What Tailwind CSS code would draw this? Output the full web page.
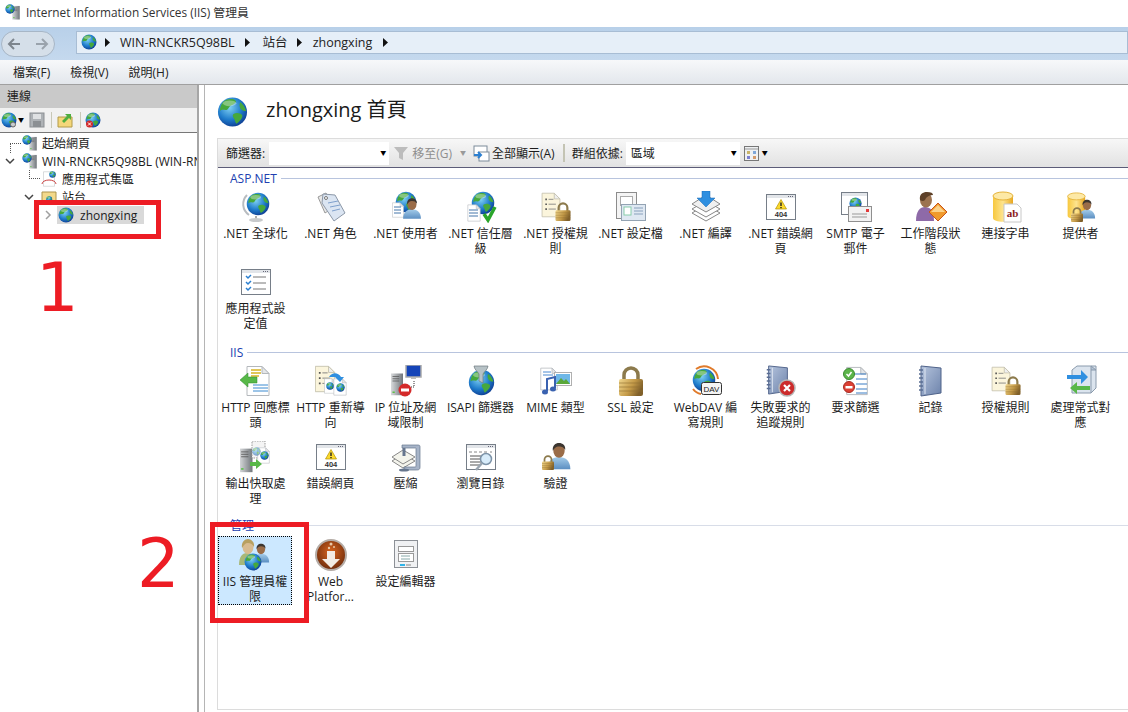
<!DOCTYPE html>
<html lang="zh-Hant">
<head>
  <meta charset="UTF-8">
  <title>Internet Information Services (IIS) 管理員</title>
  <script src="https://cdn.jsdelivr.net/npm/@tailwindcss/browser@4"></script>
</head>
<body class="w-[1128px] h-[712px] overflow-hidden relative bg-white text-[#1c1c1c] text-[12px] leading-[15px] font-['Open_Sans','Noto_Sans_CJK_TC',sans-serif]">

  <!-- shared icon parts -->
  <svg class="absolute w-0 h-0">
    <defs>
      <radialGradient id="gb" cx="0.4" cy="0.35" r="0.75"><stop offset="0" stop-color="#7fd0f2"/><stop offset="0.55" stop-color="#1f7ccb"/><stop offset="1" stop-color="#0a2f86"/></radialGradient>
      <linearGradient id="gold" x1="0" y1="0" x2="1" y2="0.4"><stop offset="0" stop-color="#f0d68c"/><stop offset="0.6" stop-color="#c49a48"/><stop offset="1" stop-color="#80602a"/></linearGradient>
      <linearGradient id="blue" x1="0" y1="0" x2="0" y2="1"><stop offset="0" stop-color="#a5cdea"/><stop offset="1" stop-color="#5c8fc2"/></linearGradient>
      <linearGradient id="gray" x1="0" y1="0" x2="1" y2="0"><stop offset="0" stop-color="#d8dadc"/><stop offset="1" stop-color="#70757a"/></linearGradient>
      <linearGradient id="yel" x1="0" y1="0" x2="1" y2="0"><stop offset="0" stop-color="#f7c83e"/><stop offset="0.5" stop-color="#fde48f"/><stop offset="1" stop-color="#e9a61c"/></linearGradient>
      <linearGradient id="gbook" x1="0" y1="0" x2="1" y2="1"><stop offset="0" stop-color="#b5c4dd"/><stop offset="1" stop-color="#6d83ab"/></linearGradient>
      <radialGradient id="brown" cx="0.5" cy="0.4" r="0.6"><stop offset="0" stop-color="#d9651f"/><stop offset="1" stop-color="#6e2c0c"/></radialGradient>
    </defs>
    <symbol id="globe" viewBox="0 0 32 32">
      <circle cx="16" cy="16" r="15" fill="url(#gb)"/>
      <path fill="#46a83c" d="M7 5c4-3 10-3 12-1 2 2-2 4-4 5-3 1-3 5-6 5-2 0-4-1-6 1 0-4 2-8 4-10z"/>
      <path fill="#46a83c" d="M17 18c3-2 7-1 9 1 1 3-3 7-6 9-2-2-1-4-3-6-1-2-1-3 0-4z"/>
      <path fill="#46a83c" d="M24 6c2 1 5 5 6 9-2 0-5-1-6-3-1-2-1-4 0-6z"/>
      <ellipse cx="13" cy="7" rx="7" ry="3" fill="#fff" opacity="0.35"/>
    </symbol>
    <symbol id="lock" viewBox="0 0 32 32">
      <path d="M9 15V10a7 7 0 0 1 14 0v5" fill="none" stroke="#8c7a4c" stroke-width="3.5"/>
      <rect x="4" y="14" width="24" height="17" rx="2" fill="url(#gold)"/>
      <path d="M4 18h24M4 22h24M4 26h24" stroke="#8f6f30" stroke-width="1" opacity="0.6"/>
    </symbol>
    <symbol id="person" viewBox="0 0 32 32">
      <path d="M3 31c0-10 6-14 13-14s13 4 13 14z" fill="url(#blue)"/>
      <ellipse cx="16" cy="10" rx="6.5" ry="8" fill="#9a6c48"/>
      <path d="M9 10c-1-6 3-9 7-9s8 3 7 8c-2-3-3-4-7-4s-5 2-7 5z" fill="#3c3630"/>
    </symbol>
    <symbol id="page" viewBox="0 0 32 32">
      <path d="M5 1.500h15l7 7v22H5z" fill="#fff" stroke="#b4b8bc"/>
      <path d="M20 1.500v7h7z" fill="#e4e6e8" stroke="#b4b8bc"/>
    </symbol>
    <symbol id="cream" viewBox="0 0 32 32">
      <path d="M5 1.500h15l7 7v22H5z" fill="#fbf5dc" stroke="#c4c0ac"/>
      <path d="M20 1.500v7h7z" fill="#eee" stroke="#c4c0ac"/>
      <path d="M9 9h2M9 15h2M9 21h2" stroke="#555" stroke-width="2"/>
      <path d="M13 9h6M13 15h9M13 21h9" stroke="#777"/>
    </symbol>
    <symbol id="win" viewBox="0 0 32 32">
      <rect x="1.500" y="3.500" width="29" height="25" fill="#fff" stroke="#767e88"/>
      <rect x="2" y="4" width="28" height="3" fill="#e2e5e9"/>
      <path d="M23 5.500h1M25 5.500h1M27 5.500h1" stroke="#667"/>
    </symbol>
    <symbol id="server" viewBox="0 0 32 32">
      <rect x="8" y="2" width="16" height="29" fill="url(#gray)"/>
      <path d="M10 6h9M10 9h9M10 12h9" stroke="#555"/>
      <rect x="10" y="26" width="3" height="2" fill="#5cc04a"/>
    </symbol>
    <symbol id="book" viewBox="0 0 32 32">
      <path d="M6 31l20-3V3L6 1z" fill="url(#gbook)" stroke="#4f6289"/>
      <path d="M10 3v26" stroke="#dfe6f1" stroke-width="1"/>
      <path d="M4 5h4M4 9h4M4 13h4M4 17h4M4 21h4M4 25h4" stroke="#5a6d93" stroke-width="1.500"/>
    </symbol>
    <symbol id="cyl" viewBox="0 0 32 32">
      <path d="M3 5v22c0 5 20 5 20 0V5z" fill="url(#yel)"/>
      <ellipse cx="13" cy="5" rx="10" ry="4" fill="#fde9a6" stroke="#e5b33a"/>
    </symbol>
    <symbol id="e404" viewBox="0 0 32 32">
      <use href="#win"/>
      <path d="M16 8.500l5.500 9.500h-11z" fill="#fbd92e" stroke="#b39200" stroke-width="0.700"/>
      <path d="M16 11.500v3.500M16 16v1.200" stroke="#222" stroke-width="1.400"/>
      <text x="16" y="26" text-anchor="middle" font-size="7.500" font-weight="700" fill="#333" font-family="Liberation Sans">404</text>
    </symbol>
    <symbol id="tree-home" viewBox="0 0 16 16">
      <use href="#server" x="3" y="1" width="16" height="15"/>
      <use href="#globe" x="0" y="0" width="10" height="10"/>
    </symbol>
  </svg>

  <!-- title bar -->
  <div class="h-[27px] flex items-center pl-[5px] pb-[3px] gap-[5px] bg-white">
    <svg class="w-4 h-4 shrink-0" viewBox="0 0 16 16"><use href="#tree-home"/></svg>
    <span class="text-[11.85px] text-[#333]">Internet Information Services (IIS) 管理員</span>
  </div>

  <!-- address bar -->
  <div class="h-[33px] flex items-center bg-gradient-to-b from-[#b8d0e9] to-[#c5d9ee]">
    <div class="w-[54px] h-[26px] ml-[1px] rounded-[13px] bg-[#d5dfe9] border border-[#a7b6c6] flex items-center justify-between px-[5px] text-[#8a9199]">
      <svg class="w-[14px] h-[14px]" viewBox="0 0 14 14"><path d="M13 7H2M7 2L2 7l5 5" fill="none" stroke="#7d858d" stroke-width="2"/></svg>
      <svg class="w-[14px] h-[14px]" viewBox="0 0 14 14"><path d="M1 7h11M7 2l5 5-5 5" fill="none" stroke="#9aa3ac" stroke-width="2"/></svg>
    </div>
    <div class="ml-[21px] flex-1 h-[23px] mb-[2px] pb-[1px] bg-[#e6eff8] border border-[#a8bdd4] flex items-center pl-[4px] text-[12.5px] text-[#222]">
      <svg class="w-4 h-4" viewBox="0 0 32 32"><use href="#globe"/></svg>
      <svg class="ml-[8px] mr-[10px] w-[5px] h-[9px]" viewBox="0 0 5 9"><path d="M0 0l5 4.500L0 9z" fill="#111"/></svg>
      <span>WIN-RNCKR5Q98BL</span>
      <svg class="ml-[10px] mr-[13px] w-[5px] h-[9px]" viewBox="0 0 5 9"><path d="M0 0l5 4.500L0 9z" fill="#111"/></svg>
      <span>站台</span>
      <svg class="ml-[9px] mr-[11px] w-[5px] h-[9px]" viewBox="0 0 5 9"><path d="M0 0l5 4.500L0 9z" fill="#111"/></svg>
      <span>zhongxing</span>
      <svg class="ml-[11px] w-[5px] h-[9px]" viewBox="0 0 5 9"><path d="M0 0l5 4.500L0 9z" fill="#111"/></svg>
    </div>
  </div>

  <!-- menu bar -->
  <div class="h-[24px] flex items-center pl-[13px] gap-[20px] bg-gradient-to-b from-[#f7f8fa] to-[#e3e7ec] text-[#222]">
    <span>檔案(F)</span>
    <span>檢視(V)</span>
    <span>說明(H)</span>
  </div>

  <div class="flex h-[628px] border-t border-[#a0a0a0]">
    <!-- connections pane -->
    <div class="w-[199px] shrink-0 border-r-2 border-[#a6a6a6] overflow-hidden bg-white">
      <div class="h-[23px] bg-[#c9c9c9] flex items-center pl-[7px] text-[#222]">連線</div>
      <div class="h-[25px] bg-[#f1f1f1] border-b border-[#777] flex items-center pl-[1px]">
        <svg class="w-4 h-4" viewBox="0 0 32 32"><use href="#globe"/><circle cx="24" cy="25" r="5" fill="#c8ccd0" stroke="#666" stroke-width="2"/></svg>
        <span class="ml-[1px] text-[6px] text-black">▼</span>
        <svg class="w-4 h-4 ml-[5px]" viewBox="0 0 16 16"><rect x="1" y="1" width="14" height="14" fill="#aeb2b6" stroke="#8b8f93"/><rect x="4" y="2" width="8" height="5" fill="#dfe1e3"/><rect x="4" y="9" width="8" height="6" fill="#8b8f93"/></svg>
        <div class="w-px h-[16px] bg-[#c8c8b8] ml-[6px]"></div>
        <svg class="w-4 h-4 ml-[5px]" viewBox="0 0 16 16"><path d="M1 5h14v10H1z" fill="#f4d77a" stroke="#b29a4b"/><path d="M5 9l5-5-2-2h6v6l-2-2-5 5z" fill="#4fae3f"/></svg>
        <div class="w-px h-[16px] bg-[#c8c8b8] ml-[7px]"></div>
        <svg class="w-4 h-4 ml-[4px]" viewBox="0 0 32 32"><use href="#globe"/><circle cx="9" cy="24" r="7" fill="#d42a2a"/><path d="M6 21l6 6M12 21l-6 6" stroke="#fff" stroke-width="2"/></svg>
      </div>
      <div class="relative pt-[1px] whitespace-nowrap">
        <div class="h-[18px] flex items-center pl-[22px]">
          <svg class="w-4 h-4 shrink-0" viewBox="0 0 16 16"><use href="#tree-home"/></svg>
          <span class="ml-[4px]">起始網頁</span>
        </div>
        <div class="h-[18px] flex items-center pl-[5px]">
          <svg class="w-[10px] h-[10px] shrink-0" viewBox="0 0 10 10"><path d="M1 3l4 4 4-4" fill="none" stroke="#444" stroke-width="1.500"/></svg>
          <svg class="w-4 h-4 ml-[7px] shrink-0" viewBox="0 0 16 16"><use href="#tree-home"/></svg>
          <span class="ml-[4px] shrink-0">WIN-RNCKR5Q98BL (WIN-RNCKR5Q98BL\Administrator)</span>
        </div>
        <div class="h-[18px] flex items-center pl-[41px]">
          <svg class="w-4 h-4 shrink-0" viewBox="0 0 32 32"><use href="#page"/><use href="#globe" x="16" y="0" width="14" height="14"/><path d="M2 26a14 8 0 0 1 28 0" fill="none" stroke="#c44" stroke-width="2"/></svg>
          <span class="ml-[5px]">應用程式集區</span>
        </div>
        <div class="h-[18px] flex items-center pl-[24px]">
          <svg class="w-[10px] h-[10px] shrink-0" viewBox="0 0 10 10"><path d="M1 3l4 4 4-4" fill="none" stroke="#444" stroke-width="1.500"/></svg>
          <svg class="w-4 h-4 ml-[7px] shrink-0" viewBox="0 0 32 32"><path d="M2 6h28v24H2z" fill="#f3d98a" stroke="#ad944c" stroke-width="2"/><use href="#globe" x="10" y="14" width="13" height="13"/></svg>
          <span class="ml-[5px]">站台</span>
        </div>
        <div class="h-[18px] flex items-center pl-[43px]">
          <svg class="w-[10px] h-[10px] shrink-0" viewBox="0 0 10 10"><path d="M3 1l4 4-4 4" fill="none" stroke="#a0a0a0" stroke-width="1.500"/></svg>
          <div class="ml-[4px] w-[87px] h-[18px] bg-[#d9d9d9] flex items-center pl-[1px]">
            <svg class="w-4 h-4 shrink-0" viewBox="0 0 32 32"><use href="#globe"/></svg>
            <span class="ml-[6px]">zhongxing</span>
          </div>
        </div>
        <!-- tree dots -->
        <div class="absolute left-[10px] top-[10px] w-[11px] border-t border-dotted border-[#555]"></div>
        <div class="absolute left-[10px] top-[10px] h-[10px] border-l border-dotted border-[#555]"></div>
        <div class="absolute left-[29px] top-[37px] w-[11px] h-[9px] border-l border-b border-dotted border-[#555]"></div>
      </div>
    </div>

    <!-- features view -->
    <div class="ml-[5px] flex-1 border-l border-[#b5b5b5] pl-[12px] min-w-0">
      <div class="h-[53px] flex items-center pt-[1px]">
        <svg class="w-[31px] h-[32px]" viewBox="0 0 32 32"><use href="#globe"/></svg>
        <span class="ml-[18px] mb-[4px] text-[20px] leading-[26px] text-[#1a1a1a]">zhongxing 首頁</span>
      </div>
      <div class="h-[572px] border-l border-t border-b border-[#dcdcdc]">
        <!-- filter strip -->
        <div class="h-[29px] border-b border-[#5c5c78] bg-gradient-to-b from-[#f7f7f7] to-[#e2e2e2] flex items-center pl-[8px] whitespace-nowrap">
          <span>篩選器:</span>
          <div class="ml-[4px] w-[120px] h-[23px] bg-white flex items-center justify-end pr-[3px] text-[6px] text-black">▼</div>
          <svg class="ml-[4px] w-[16px] h-[16px]" viewBox="0 0 16 16"><path d="M1 2h14l-5 6v7l-4-2V8z" fill="#bcbcbc"/></svg>
          <span class="ml-[3px] text-[#8e8e8e]">移至(G)</span>
          <span class="ml-[8px] text-[6px] text-[#999]">▼</span>
          <svg class="ml-[7px] w-[17px] h-[17px]" viewBox="0 0 17 17"><rect x="1" y="1" width="13" height="10" fill="#fff" stroke="#7d8b9a"/><rect x="6" y="7" width="10" height="9" fill="#fff" stroke="#7d8b9a"/><path d="M1 10h7M5 7l3 3-3 3" fill="none" stroke="#2c7fd0" stroke-width="2"/></svg>
          <span class="ml-[2px]">全部顯示(A)</span>
          <div class="ml-[8px] w-[2px] h-[18px] bg-[#c4c4b4]"></div>
          <span class="ml-[7px]">群組依據:</span>
          <div class="ml-[3px] w-[114px] h-[23px] bg-white flex items-center justify-between pl-[5px] pr-[3px]"><span>區域</span><span class="text-[6px] text-black">▼</span></div>
          <svg class="ml-[4px] w-[15px] h-[15px]" viewBox="0 0 15 15"><rect x="0.500" y="0.500" width="14" height="14" fill="#eef0f2" stroke="#777"/><path d="M1 3h13" stroke="#999"/><rect x="3" y="5" width="3" height="3" fill="#c9b46a"/><rect x="9" y="5" width="3" height="3" fill="#7ea6d8"/><rect x="3" y="10" width="3" height="3" fill="#7b7fd0"/><rect x="9" y="10" width="3" height="3" fill="#d39a6c"/></svg>
          <span class="ml-[3px] text-[6px] text-black">▼</span>
        </div>

        <!-- ASP.NET -->
        <div class="h-[20px] flex items-center pl-[12px]">
          <span class="text-[#2040b0]">ASP.NET</span>
          <div class="ml-[4px] flex-1 h-px bg-[#b8c4de]"></div>
        </div>
        <div class="grid grid-cols-[repeat(12,75px)] auto-rows-[75px] text-center">
          <div class="flex flex-col items-center pt-[3px]">
            <svg class="w-8 h-8 mb-[3px]" viewBox="0 0 32 32"><path d="M7 4a13 13 0 0 0 2 20" fill="none" stroke="#b8bcc0" stroke-width="2"/><use href="#globe" x="6" y="1" width="24" height="24"/><path d="M16 25v3" stroke="#aaa" stroke-width="2"/><ellipse cx="16" cy="29" rx="7" ry="2" fill="#c8cacc"/></svg>
            <span class="whitespace-nowrap">.NET 全球化</span>
          </div>
          <div class="flex flex-col items-center pt-[3px]">
            <svg class="w-8 h-8 mb-[3px]" viewBox="0 0 32 32"><path d="M3 6l8-4 8 14-9 6z" fill="#e8e8e8" stroke="#999"/><path d="M8 3l12 1 10 18-11 8-12-18z" fill="#dbe5f2" stroke="#8c98a8"/><path d="M13 12l10-2M15 16l10-2M17 20l8-2" stroke="#7fa0cc"/><circle cx="11" cy="7" r="1.500" fill="#fff" stroke="#777"/></svg>
            <span class="whitespace-nowrap">.NET 角色</span>
          </div>
          <div class="flex flex-col items-center pt-[3px]">
            <svg class="w-8 h-8 mb-[3px]" viewBox="0 0 32 32"><use href="#globe" x="5" y="0" width="22" height="22"/><use href="#page" x="0" y="9" width="16" height="20"/><path d="M4 16h7M4 19h7M4 22h7" stroke="#4477aa"/><use href="#person" x="11" y="4" width="22" height="27"/></svg>
            <span class="whitespace-nowrap">.NET 使用者</span>
          </div>
          <div class="flex flex-col items-center pt-[3px]">
            <svg class="w-8 h-8 mb-[3px]" viewBox="0 0 32 32"><use href="#globe" x="6" y="0" width="24" height="24"/><use href="#page" x="0" y="12" width="18" height="20"/><path d="M4 19h9M4 22h9M4 25h9" stroke="#4477aa"/><path d="M19 23l4 6 7-13" fill="none" stroke="#2aa52a" stroke-width="3.500"/></svg>
            <span>.NET 信任層<br>級</span>
          </div>
          <div class="flex flex-col items-center pt-[3px]">
            <svg class="w-8 h-8 mb-[3px]" viewBox="0 0 32 32"><use href="#cream" x="-2" y="0" width="26" height="28"/><use href="#lock" x="13" y="9" width="20" height="23"/></svg>
            <span>.NET 授權規<br>則</span>
          </div>
          <div class="flex flex-col items-center pt-[3px]">
            <svg class="w-8 h-8 mb-[3px]" viewBox="0 0 32 32"><rect x="1.500" y="1.500" width="20" height="26" fill="#f4f4f4" stroke="#8c8c8c"/><rect x="5.500" y="5.500" width="12" height="9" fill="#fff" stroke="#aaa"/><rect x="6.500" y="13.500" width="24" height="16" fill="#dfe8f2" stroke="#93a3b3"/><rect x="9" y="16" width="7" height="8" fill="#fff" stroke="#8ca"/><path d="M19 17h9M19 20h9M19 23h9" stroke="#88a0bc"/></svg>
            <span class="whitespace-nowrap">.NET 設定檔</span>
          </div>
          <div class="flex flex-col items-center pt-[3px]">
            <svg class="w-8 h-8 mb-[3px]" viewBox="0 0 32 32"><path d="M2 22l14-8 14 8-14 8z" fill="#fff" stroke="#888"/><path d="M2 18l14-8 14 8-14 8z" fill="#fff" stroke="#888"/><path d="M2 13l14-9 14 9-14 8z" fill="#f0f0f0" stroke="#888"/><path d="M12 0h8v7h5l-9 9-9-9h5z" fill="#2f8fe0" stroke="#1a6ab4" stroke-width="0.500"/></svg>
            <span class="whitespace-nowrap">.NET 編譯</span>
          </div>
          <div class="flex flex-col items-center pt-[3px]">
            <svg class="w-8 h-8 mb-[3px]" viewBox="0 0 32 32"><use href="#e404"/></svg>
            <span>.NET 錯誤網<br>頁</span>
          </div>
          <div class="flex flex-col items-center pt-[3px]">
            <svg class="w-8 h-8 mb-[3px]" viewBox="0 0 32 32"><rect x="1.500" y="1.500" width="26" height="22" fill="#fff" stroke="#767e88"/><rect x="2" y="2" width="25" height="3" fill="#e2e5e9"/><use href="#globe" x="9" y="6" width="13" height="13"/><rect x="8.500" y="15.500" width="23" height="15" fill="#f2f2f2" stroke="#8f8f8f"/><rect x="26" y="18" width="3" height="3" fill="#e23a3a"/><path d="M12 23h15M12 26h15" stroke="#999"/></svg>
            <span>SMTP 電子<br>郵件</span>
          </div>
          <div class="flex flex-col items-center pt-[3px]">
            <svg class="w-8 h-8 mb-[3px]" viewBox="0 0 32 32"><path d="M1 30c0-10 4-14 9-14s9 3 9 14z" fill="#8e6aa8"/><ellipse cx="11" cy="9" rx="6" ry="7.500" fill="#9c7350"/><path d="M5 9c-1-6 3-8 7-8s6 1 6 3c-3 0-5 1-7 3-1 3-3 4-6 2z" fill="#5d4028"/><path d="M23 12l9 9-9 9-9-9z" fill="#f09a2c" stroke="#c8541a"/><path d="M23 14l7 7H16z" fill="#fbd28a"/></svg>
            <span>工作階段狀<br>態</span>
          </div>
          <div class="flex flex-col items-center pt-[3px]">
            <svg class="w-8 h-8 mb-[3px]" viewBox="0 0 32 32"><use href="#cyl"/><path d="M14 13h13l4 4v14H14z" fill="#fff" stroke="#c8c8c8"/><text x="22.500" y="26" text-anchor="middle" font-size="11" font-weight="700" fill="#8c1a1a" font-family="Liberation Serif">ab</text></svg>
            <span class="whitespace-nowrap">連接字串</span>
          </div>
          <div class="flex flex-col items-center pt-[3px]">
            <svg class="w-8 h-8 mb-[3px]" viewBox="0 0 32 32"><use href="#cyl" x="0" y="0" width="28" height="30"/><use href="#person" x="12" y="5" width="20" height="26"/><use href="#lock" x="4" y="15" width="16" height="17"/></svg>
            <span class="whitespace-nowrap">提供者</span>
          </div>
          <div class="flex flex-col items-center pt-[3px]">
            <svg class="w-8 h-8 mb-[3px]" viewBox="0 0 32 32"><use href="#win"/><path d="M6 10l2 2 3-3M6 16l2 2 3-3M6 22l2 2 3-3" fill="none" stroke="#2a7fd0" stroke-width="1.500"/><path d="M13 11h13M13 17h13M13 23h13" stroke="#777"/></svg>
            <span>應用程式設<br>定值</span>
          </div>
        </div>

        <!-- IIS -->
        <div class="h-[24px] flex items-center pl-[12px] pt-[4px]">
          <span class="text-[#2040b0]">IIS</span>
          <div class="ml-[4px] flex-1 h-px bg-[#b8c4de]"></div>
        </div>
        <div class="grid grid-cols-[repeat(12,75px)] auto-rows-[76px] text-center">
          <div class="flex flex-col items-center pt-[3px]">
            <svg class="w-8 h-8 mb-[3px]" viewBox="0 0 32 32"><use href="#page" x="2" y="0" width="32" height="32"/><path d="M11 5h10M11 8h10M11 11h8" stroke="#d8b422" stroke-width="1.500"/><path d="M13 20h15M13 23h15M13 26h15" stroke="#3a8ad0"/><path d="M0 15l8-7v4h9v6H8v4z" fill="#58b848" stroke="#2d8a2d" stroke-width="0.500"/></svg>
            <span>HTTP 回應標<br>頭</span>
          </div>
          <div class="flex flex-col items-center pt-[3px]">
            <svg class="w-8 h-8 mb-[3px]" viewBox="0 0 32 32"><use href="#cream" x="-4" y="0" width="28" height="28"/><use href="#page" x="7" y="11" width="16" height="20"/><use href="#page" x="16" y="12" width="18" height="20"/><use href="#globe" x="11" y="17" width="8" height="8"/><use href="#globe" x="21" y="18" width="9" height="9"/><path d="M14 12c3-5 9-5 12 0h3l-4 5-5-5z" fill="#2f8fe0"/></svg>
            <span>HTTP 重新導<br>向</span>
          </div>
          <div class="flex flex-col items-center pt-[3px]">
            <svg class="w-8 h-8 mb-[3px]" viewBox="0 0 32 32"><rect x="16" y="0" width="15" height="12" fill="#1544b8" stroke="#aaa" stroke-width="1.500"/><rect x="21" y="12" width="5" height="2" fill="#bbb"/><use href="#server" x="-5" y="7" width="24" height="24"/><path d="M24 16v6h-4" fill="none" stroke="#333" stroke-dasharray="1 1"/><circle cx="15" cy="25" r="6.500" fill="#d42a2a"/><rect x="11" y="23.500" width="8" height="3" fill="#fff"/></svg>
            <span>IP 位址及網<br>域限制</span>
          </div>
          <div class="flex flex-col items-center pt-[3px]">
            <svg class="w-8 h-8 mb-[3px]" viewBox="0 0 32 32"><use href="#globe" x="3" y="4" width="27" height="27"/><path d="M9 1h14c0 3-4 6-5 8v9l-4-2V9C13 7 9 4 9 1z" fill="#b7c2c6" stroke="#6f7a7e" stroke-width="0.700"/></svg>
            <span class="whitespace-nowrap">ISAPI 篩選器</span>
          </div>
          <div class="flex flex-col items-center pt-[3px]">
            <svg class="w-8 h-8 mb-[3px]" viewBox="0 0 32 32"><use href="#page" x="-3" y="0" width="24" height="28"/><path d="M3 7h8M3 10h10" stroke="#4a8ad0"/><rect x="14.500" y="7.500" width="17" height="13" fill="#fff" stroke="#b0b0b0"/><rect x="16" y="9" width="14" height="10" fill="#6fb8e8"/><path d="M16 19l5-6 3 3 2-2 4 5z" fill="#5aa83a"/><path d="M7 26V14l8-2v11" fill="none" stroke="#3a62b0" stroke-width="2"/><ellipse cx="5" cy="27" rx="3" ry="2.500" fill="#3a62b0"/><ellipse cx="13" cy="24" rx="3" ry="2.500" fill="#3a62b0"/></svg>
            <span class="whitespace-nowrap">MIME 類型</span>
          </div>
          <div class="flex flex-col items-center pt-[3px]">
            <svg class="w-8 h-8 mb-[3px]" viewBox="0 0 32 32"><use href="#lock"/></svg>
            <span class="whitespace-nowrap">SSL 設定</span>
          </div>
          <div class="flex flex-col items-center pt-[3px]">
            <svg class="w-8 h-8 mb-[3px]" viewBox="0 0 32 32"><use href="#globe" x="2" y="2" width="24" height="26"/><path d="M6 4a14 14 0 0 1 22 10M3 24a13 13 0 0 0 8 5" fill="none" stroke="#e07a2a" stroke-width="2"/><rect x="11.500" y="17.500" width="20" height="12" rx="2" fill="#f4f4f4" stroke="#333"/><text x="21.500" y="26.500" text-anchor="middle" font-size="8" fill="#222" font-family="Liberation Sans">DAV</text></svg>
            <span>WebDAV 編<br>寫規則</span>
          </div>
          <div class="flex flex-col items-center pt-[3px]">
            <svg class="w-8 h-8 mb-[3px]" viewBox="0 0 32 32"><use href="#book" x="-2" y="0" width="30" height="30"/><circle cx="22" cy="23" r="8" fill="#cc2b2b" stroke="#b5b5b5" stroke-width="1.500"/><path d="M19 20l6 6M25 20l-6 6" stroke="#fff" stroke-width="2.200"/></svg>
            <span>失敗要求的<br>追蹤規則</span>
          </div>
          <div class="flex flex-col items-center pt-[3px]">
            <svg class="w-8 h-8 mb-[3px]" viewBox="0 0 32 32"><use href="#page" x="2" y="0" width="30" height="32"/><path d="M14 9h12M16 14h11M16 19h11M16 24h11M16 28h11" stroke="#3a7cc4"/><circle cx="9" cy="9" r="5.500" fill="#5cb54a" stroke="#3a8a30"/><path d="M6.500 9l2 2 3-4" fill="none" stroke="#fff" stroke-width="1.500"/><circle cx="9" cy="22" r="5.500" fill="#dc4034" stroke="#a82a22"/><rect x="5.500" y="21" width="7" height="2.500" fill="#fff"/></svg>
            <span class="whitespace-nowrap">要求篩選</span>
          </div>
          <div class="flex flex-col items-center pt-[3px]">
            <svg class="w-8 h-8 mb-[3px]" viewBox="0 0 32 32"><use href="#book"/></svg>
            <span class="whitespace-nowrap">記錄</span>
          </div>
          <div class="flex flex-col items-center pt-[3px]">
            <svg class="w-8 h-8 mb-[3px]" viewBox="0 0 32 32"><use href="#cream" x="-2" y="0" width="26" height="28"/><use href="#lock" x="13" y="9" width="20" height="23"/></svg>
            <span class="whitespace-nowrap">授權規則</span>
          </div>
          <div class="flex flex-col items-center pt-[3px]">
            <svg class="w-8 h-8 mb-[3px]" viewBox="0 0 32 32"><path d="M7 5l5-4h19v22l-5 5H7z" fill="#dbe4ee" stroke="#8a9aac"/><path d="M26 5h5l-5-4zM26 5v23" fill="#b4c4d6" stroke="#8a9aac"/><path d="M2 10h14V5l7 7-7 7v-5H2z" fill="#2f8fe0"/><path d="M25 21H12v-4l-7 6 7 6v-4h13z" fill="#58b848"/></svg>
            <span>處理常式對<br>應</span>
          </div>
          <div class="flex flex-col items-center pt-[3px]">
            <svg class="w-8 h-8 mb-[3px]" viewBox="0 0 32 32"><use href="#server" x="-7" y="6" width="26" height="26"/><rect x="12" y="0" width="13" height="17" fill="#f4f4f4" stroke="#999" stroke-dasharray="1.500 1"/><use href="#page" x="15" y="5" width="17" height="19"/><use href="#globe" x="12" y="6" width="9" height="9" opacity="0.500"/><use href="#globe" x="20" y="10" width="9" height="9"/><path d="M10 21h6v-3l6 5-6 5v-3h-6z" fill="#58b848"/></svg>
            <span>輸出快取處<br>理</span>
          </div>
          <div class="flex flex-col items-center pt-[3px]">
            <svg class="w-8 h-8 mb-[3px]" viewBox="0 0 32 32"><use href="#e404"/></svg>
            <span class="whitespace-nowrap">錯誤網頁</span>
          </div>
          <div class="flex flex-col items-center pt-[3px]">
            <svg class="w-8 h-8 mb-[3px]" viewBox="0 0 32 32"><path d="M2 20l11-7 12 7-12 7z" fill="#f4f4ec" stroke="#888"/><path d="M2 16l11-7 12 7-12 7z" fill="#f4f4ec" stroke="#888"/><path d="M12 4h16c2 0 2 1 2 2v20c0 3-2 3-4 3H14v-3h10c2 0 2 0 2-2V8c0-1 0-1-1-1H12z" fill="#a7b4c8" stroke="#66768e" stroke-width="0.700"/><path d="M14 7v8" stroke="#66768e" stroke-width="3"/><ellipse cx="14" cy="29" rx="5" ry="1.500" fill="#66768e"/></svg>
            <span class="whitespace-nowrap">壓縮</span>
          </div>
          <div class="flex flex-col items-center pt-[3px]">
            <svg class="w-8 h-8 mb-[3px]" viewBox="0 0 32 32"><use href="#win"/><path d="M4 11h3M9 11h3M14 11h3M19 11h3M25 11h2" stroke="#888"/><path d="M5 15h11M5 18h11M5 21h11M5 24h11" stroke="#555"/><circle cx="21" cy="18" r="5.500" fill="#d8ecfa" stroke="#7d93a8" stroke-width="1.500"/><path d="M17 22l-6 7" stroke="#9aa5b0" stroke-width="2.500"/></svg>
            <span class="whitespace-nowrap">瀏覽目錄</span>
          </div>
          <div class="flex flex-col items-center pt-[3px]">
            <svg class="w-8 h-8 mb-[3px]" viewBox="0 0 32 32"><use href="#person" x="5" y="0" width="28" height="30"/><use href="#lock" x="0" y="12" width="16" height="19"/></svg>
            <span class="whitespace-nowrap">驗證</span>
          </div>
        </div>

        <!-- management -->
        <div class="h-[22px] flex items-center pl-[12px] pt-[1px]">
          <span class="text-[#2040b0]">管理</span>
          <div class="ml-[4px] flex-1 h-px bg-[#d8dde8]"></div>
        </div>
        <div class="grid grid-cols-[repeat(12,75px)] auto-rows-[76px] text-center">
          <div class="w-[74px] h-[69px] bg-[#cce8ff] border border-dotted border-black flex flex-col items-center pt-[2px]">
            <svg class="w-8 h-8 mb-[3px]" viewBox="0 0 32 32"><path d="M0 26c0-8 3-12 8-12s8 4 8 12z" fill="#a8b878"/><ellipse cx="9" cy="8" rx="5.500" ry="7" fill="#d8bb90"/><path d="M3 9c-1-6 3-9 6-9s7 3 6 8c-2-3-3-4-6-4S5 6 3 9z" fill="#b8a060"/><use href="#person" x="12" y="2" width="20" height="24"/><use href="#globe" x="5" y="14" width="18" height="18"/></svg>
            <span>IIS 管理員權<br>限</span>
          </div>
          <div class="flex flex-col items-center pt-[3px]">
            <svg class="w-8 h-8 mb-[3px]" viewBox="0 0 32 32"><circle cx="16" cy="16" r="15" fill="url(#brown)" stroke="#b5aca6" stroke-width="2"/><path d="M12 12h8v8h5l-9 9-9-9h5z" fill="#f2ece4"/><circle cx="16" cy="5" r="1.500" fill="#e8c8a8"/><circle cx="19" cy="8" r="1" fill="#e8c8a8"/><circle cx="14" cy="9" r="1.200" fill="#e8c8a8"/></svg>
            <span>Web<br>Platfor...</span>
          </div>
          <div class="flex flex-col items-center pt-[3px]">
            <svg class="w-8 h-8 mb-[3px]" viewBox="0 0 32 32"><rect x="4.500" y="1.500" width="23" height="27" fill="#f0f1f3" stroke="#8c9096"/><rect x="8.500" y="7.500" width="15" height="5" fill="#fff" stroke="#999"/><rect x="8.500" y="14.500" width="15" height="8" fill="#fff" stroke="#999"/><path d="M11 17h9M11 20h9" stroke="#8aa"/><rect x="10" y="25" width="5" height="2" fill="#30b4e8"/><rect x="16" y="25" width="5" height="2" fill="#bbb"/></svg>
            <span class="whitespace-nowrap">設定編輯器</span>
          </div>
        </div>
      </div>
    </div>
  </div>

  <!-- red annotations drawn over the screenshot -->
  <div class="absolute left-[34px] top-[200px] w-[127px] h-[39px] border-[5px] border-[#ed1c24]"></div>
  <div class="absolute left-[210px] top-[522px] w-[99px] h-[101px] border-[5px] border-[#ed1c24]"></div>
  <div class="absolute left-[36px] top-[240px] text-[67px] leading-[96px] text-[#ed1c24] font-['DejaVu_Sans',sans-serif]">1</div>
  <div class="absolute left-[137px] top-[516px] text-[67px] leading-[96px] text-[#ed1c24] font-['DejaVu_Sans',sans-serif]">2</div>
</body>
</html>
